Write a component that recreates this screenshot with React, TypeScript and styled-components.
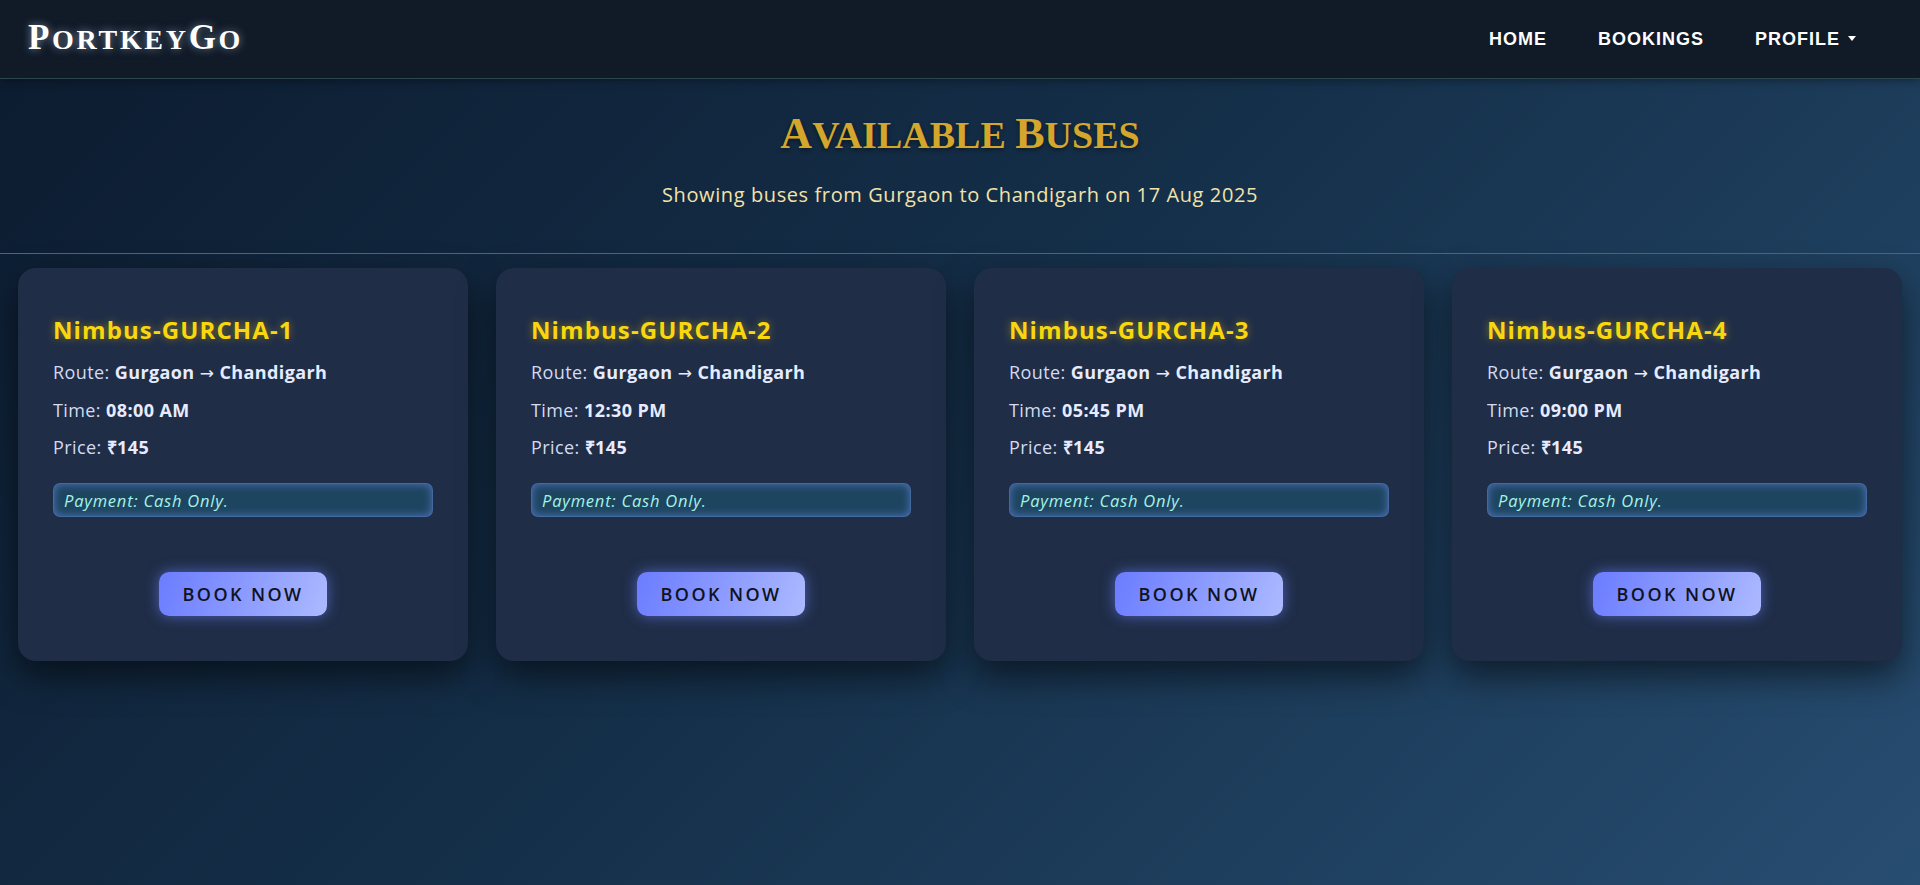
import React from 'react';
import styled, { createGlobalStyle } from 'styled-components';

const GlobalStyle = createGlobalStyle`
  * {
    box-sizing: border-box;
  }

  body {
    margin: 0;
    font-family: "Open Sans", sans-serif;
    background: #0f1f33;
  }
`;

const buses = [
  { name: 'Nimbus-GURCHA-1', time: '08:00 AM' },
  { name: 'Nimbus-GURCHA-2', time: '12:30 PM' },
  { name: 'Nimbus-GURCHA-3', time: '05:45 PM' },
  { name: 'Nimbus-GURCHA-4', time: '09:00 PM' },
];

function App() {
  return (
    <Page>
      <GlobalStyle />
      <NavBar>
        <Logo>
          <BigCap>P</BigCap>ortkey<BigCap>G</BigCap>o
        </Logo>
        <NavLinks>
          <NavLink href="#">Home</NavLink>
          <NavLink href="#">Bookings</NavLink>
          <NavLink href="#">
            Profile <Caret />
          </NavLink>
        </NavLinks>
      </NavBar>

      <Header>
        <Title>
          <TitleCap>A</TitleCap>vailable <TitleCap>B</TitleCap>uses
        </Title>
        <Subtitle>Showing buses from Gurgaon to Chandigarh on 17 Aug 2025</Subtitle>
      </Header>

      <CardGrid>
        {buses.map((bus) => (
          <BusCard key={bus.name}>
            <BusName>{bus.name}</BusName>
            <InfoLine>
              Route: <strong>Gurgaon <Arrow>→</Arrow> Chandigarh</strong>
            </InfoLine>
            <InfoLine>
              Time: <strong>{bus.time}</strong>
            </InfoLine>
            <InfoLine>
              Price: <strong>₹145</strong>
            </InfoLine>
            <PaymentNote>Payment: Cash Only.</PaymentNote>
            <BookButton>Book Now</BookButton>
          </BusCard>
        ))}
      </CardGrid>
    </Page>
  );
}

const Page = styled.div`
  min-height: 100vh;
  background: linear-gradient(135deg, #0c1b2f 0%, #15304a 50%, #274d71 100%);
`;

const NavBar = styled.nav`
  height: 79px;
  display: flex;
  align-items: center;
  justify-content: space-between;
  padding: 0 64px 0 28px;
  background: #111a27;
  border-bottom: 1px solid #2c454f;
  box-shadow: 0 2px 8px rgba(0, 0, 0, 0.35);
`;

const Logo = styled.div`
  font-family: "Liberation Serif", serif;
  font-size: 28px;
  font-weight: 700;
  letter-spacing: 2.7px;
  text-transform: uppercase;
  color: #ffffff;
  text-shadow: 0 0 8px rgba(200, 230, 255, 0.55);
  margin-top: -2px;
`;

const BigCap = styled.span`
  font-size: 35px;
`;

const NavLinks = styled.div`
  display: flex;
  align-items: center;
  gap: 51px;
`;

const NavLink = styled.a`
  display: flex;
  align-items: center;
  gap: 8px;
  font-family: "Liberation Sans", Arial, sans-serif;
  font-size: 18px;
  font-weight: 700;
  letter-spacing: 1px;
  text-transform: uppercase;
  color: #ffffff;
  text-decoration: none;
`;

const Caret = styled.span`
  display: inline-block;
  width: 0;
  height: 0;
  margin-top: -2px;
  border-left: 4px solid transparent;
  border-right: 4px solid transparent;
  border-top: 5px solid #ffffff;
`;

const Header = styled.header`
  text-align: center;
  padding: 29px 0 44px;
  border-bottom: 1px solid #4d6680;
`;

const Title = styled.h1`
  margin: 0;
  font-family: "Liberation Serif", serif;
  font-size: 38px;
  font-weight: 700;
  line-height: 52px;
  text-transform: uppercase;
  color: #d4a62b;
  text-shadow: 0 2px 4px rgba(0, 0, 0, 0.45);
`;

const TitleCap = styled.span`
  font-size: 44px;
`;

const Subtitle = styled.p`
  margin: 20px 0 0;
  font-size: 20px;
  line-height: 28px;
  letter-spacing: 0.6px;
  color: #f2e2a9;
`;

const CardGrid = styled.main`
  display: grid;
  grid-template-columns: repeat(4, 1fr);
  gap: 28px;
  padding: 14px 18px 40px;
`;

const BusCard = styled.section`
  display: flex;
  flex-direction: column;
  align-items: flex-start;
  padding: 48px 35px 45px;
  border-radius: 18px;
  background: #1f2d47;
  box-shadow: 0 15px 35px rgba(0, 0, 0, 0.55);
`;

const BusName = styled.h3`
  margin: 0 0 15px;
  font-size: 24px;
  font-weight: 700;
  line-height: 28px;
  letter-spacing: 1.1px;
  color: #f8d70f;
  text-shadow: 0 0 8px rgba(255, 210, 0, 0.45);
`;

const InfoLine = styled.p`
  margin: 0 0 10px;
  font-size: 18px;
  line-height: 27px;
  letter-spacing: 0.4px;
  color: #d3daf2;

  strong {
    font-weight: 700;
    color: #e7ebff;
  }
`;

const Arrow = styled.span`
  font-family: "DejaVu Sans", sans-serif;
  font-weight: 400;
  font-size: 17px;
`;

const PaymentNote = styled.div`
  align-self: stretch;
  margin-top: 12px;
  height: 34px;
  display: flex;
  align-items: center;
  padding: 0 10px;
  border: 1px solid rgba(98, 135, 215, 0.55);
  border-radius: 7px;
  background: #1e4560;
  box-shadow: inset 0 0 9px rgba(96, 132, 220, 0.75);
  font-size: 16.5px;
  font-style: italic;
  letter-spacing: 0.8px;
  color: #a6f2e6;
`;

const BookButton = styled.button`
  align-self: center;
  margin-top: 55px;
  width: 168px;
  height: 44px;
  border: none;
  border-radius: 10px;
  background: linear-gradient(110deg, #6b7cff 0%, #8e9dff 55%, #adbaff 100%);
  box-shadow: 0 0 14px rgba(110, 130, 255, 0.6);
  font-family: "Open Sans", sans-serif;
  font-size: 18px;
  font-weight: 600;
  letter-spacing: 2.4px;
  text-transform: uppercase;
  color: #10131f;
  cursor: pointer;
`;

export default App;
